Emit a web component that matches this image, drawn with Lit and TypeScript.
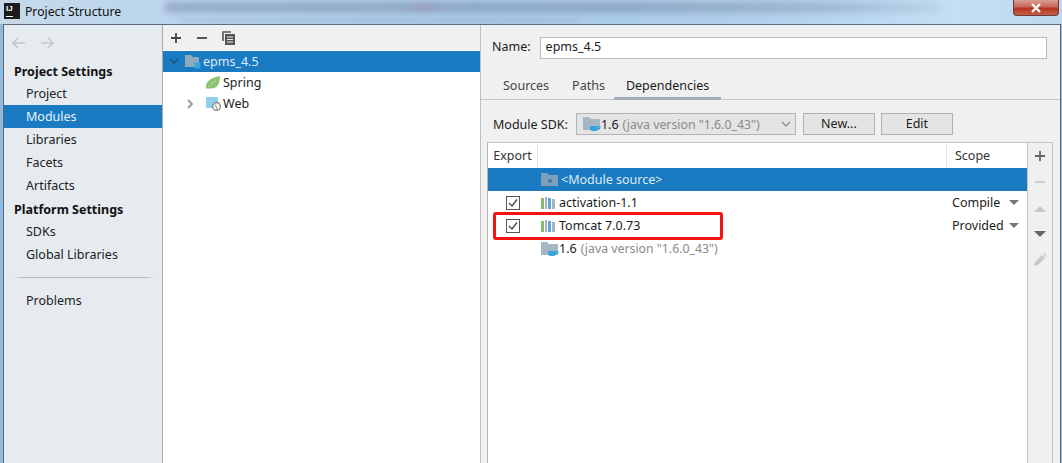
import { LitElement, html, css, svg } from "lit";
import { customElement } from "lit/decorators.js";

const folder = (overlay: unknown, color = "#a6b6c3") => html`<svg class="ic" width="18" height="16" viewBox="0 0 18 16">
  <path d="M0 1h6l2 2h9v11H0z" fill="${color}"/>${overlay}</svg>`;
const sdk = folder(svg`<path d="M7 10h8v2.500a2.500 2.500 0 0 1-2.500 2.500h-3A2.500 2.500 0 0 1 7 12.500z" fill="#35a5dc"/><path d="M15 10.500h2v2h-2" fill="none" stroke="#35a5dc"/>`);
const lib = html`<svg class="ic lb" width="16" height="14" viewBox="0 0 16 14">
  <rect x="0" y="2" width="3" height="11" fill="#86b872"/><rect x="4" y="1" width="2" height="12" fill="#a9b4bc"/>
  <rect x="7" y="2" width="3" height="11" fill="#58a8d8"/><rect x="11" y="3" width="3" height="10" fill="#a9b4bc"/></svg>`;
const check = html`<svg class="chk" width="14" height="14" viewBox="0 0 14 14">
  <rect x=".5" y=".5" width="13" height="13" fill="#fff" stroke="#555"/><path d="M3 7l3 3 5-6.500" fill="none" stroke="#444" stroke-width="1.300"/></svg>`;

@customElement("app-root")
export class AppRoot extends LitElement {
  static styles = css`
    :host { display: block; width: 1062px; height: 463px; overflow: hidden; position: relative;
      font: 12.5px "Noto Sans", "Open Sans", sans-serif; color: #1c1c1c; background: #8fb9de; }
    .title { height: 24px; position: relative; overflow: hidden; display: flex; align-items: center; gap: 5px; padding: 0 0 2px 4px; box-sizing: border-box;
      background: linear-gradient(90deg,#c6d9ea 0,#bcd6ee 14%,#a9cbe9 45%,#b0d0ec 70%,#c4dff5 90%,#bcd8ef 100%); }
    .blur { position: absolute; left: 165px; top: 2px; width: 775px; height: 11px; filter: blur(3px);
      background: linear-gradient(90deg,#8e92b0,#7f93ab 2%,#7f93ab 31%,#8c7f9f 33%,#7d91ad 36%,#7d91ad 60%,#8ea3bd 85%,#b5cde3); opacity: .6; }
    .blur2 { position: absolute; left: 180px; top: 19px; width: 400px; height: 3px; filter: blur(2px); background: #8fa9c4; opacity: .5; }
    .logo { width: 16px; height: 16px; background: #1b1b1b; color: #fff; font: 700 8px/10px "Liberation Sans", sans-serif; box-sizing: border-box; padding: 1px 0 0 2px; position: relative; flex: none; }
    .logo i { position: absolute; left: 2px; bottom: 2px; width: 7px; height: 1px; background: #fff; }
    .ttxt { font-size: 12.2px; position: relative; color: #111; }
    .close { position: absolute; right: 3px; top: 0; width: 46px; height: 16px; box-sizing: border-box; border: 1px solid #6d3b36; border-top: 0; border-radius: 0 0 4px 4px;
      background: linear-gradient(#d89e93,#c9685a 45%,#b5341f 55%,#c4604c); display: flex; align-items: center; justify-content: center; }
    .win { position: absolute; left: 3px; right: 1px; top: 24px; bottom: 0; border: 1px solid #5a6b7c; border-bottom: 0; display: flex; background: #f0f0f0; }
    .side { width: 158px; flex: none; background: #e6ebf0; border-right: 1px solid #a8a8a8; }
    .nav { height: 35px; display: flex; align-items: center; gap: 12px; padding-left: 7px; }
    .h { height: 22px; line-height: 24px; font-weight: 700; padding-left: 10px; color: #111; }
    .h.two { height: 23px; line-height: 26px; }
    .i { height: 23px; line-height: 23px; padding-left: 22px; color: #222; }
    .i.sel { background: #1a7bc3; color: #e8f0f8; }
    .sep { height: 1px; margin: 11px 6px 11px 8px; background: linear-gradient(90deg,#e6ebf0,#b5b9bd 8%,#b5b9bd 92%,#e6ebf0); }
    .mid { width: 317px; flex: none; border-right: 1px solid #c0c0c0; display: flex; flex-direction: column; }
    .tb { display: flex; align-items: center; gap: 14px; padding-left: 7px; border-bottom: 1px solid #fff; box-sizing: border-box; height: 26px; }
    .tree { flex: 1; background: #fff; }
    .r { height: 21px; display: flex; align-items: center; }
    .r.sel { background: #1a7bc3; color: #dfeaf4; }
    .r.leaf { padding-left: 42px; }
    .r.web { padding-left: 16px; }
    .r.web .ic { margin-left: 4px; }
    .tw { width: 22px; display: flex; justify-content: center; }
    .r .ic { margin-right: 2px; }
    .main { flex: 1; min-width: 0; display: flex; flex-direction: column; }
    .name { display: flex; align-items: center; height: 22px; margin: 12px 0 0 11px; gap: 9px; line-height: 20px; }
    .name span { position: relative; top: -1px; }
    .input { width: 507px; height: 22px; box-sizing: border-box; flex: none; border: 1px solid #b8b8b8; background: #fff; padding-left: 5px; line-height: 18px; color: #222; }
    .tabs { display: flex; margin-top: 15px; height: 26px; border-bottom: 1px solid #c9c9c9; padding-left: 10px; box-sizing: border-box; }
    .tab { padding: 0 12px; line-height: 23px; color: #444; box-sizing: border-box; height: 26px; }
    .tab.src { padding-right: 11px; }
    .tab.pth { padding: 0 9px 0 12px; }
    .tab.on { color: #1c1c1c; box-shadow: inset 0 -3px 0 #a3adb9; }
    .sdk { display: flex; align-items: center; height: 22px; margin: 13px 0 0 12px; }
    .combo { width: 220px; height: 22px; box-sizing: border-box; margin-left: 8px; border: 1px solid #b4b4b4; background: #e4e4e4; display: flex; align-items: center; padding-left: 6px; white-space: nowrap; position: relative; color: #222; }
    .gray { color: #8a8a8a; margin-left: 4px; font-size: 12.3px; }
    .combo svg.ch { position: absolute; right: 4px; top: 7px; }
    .btn { height: 22px; box-sizing: border-box; width: 72px; border: 1px solid #b0b0b0; background: #e4e4e4; text-align: center; line-height: 19px; margin-left: 7px; color: #222; }
    .btn + .btn { margin-left: 6px; }
    .tw2 { flex: 1; display: flex; margin: 7px 7px 0 6px; min-height: 0; border: 1px solid #c4c4c4; border-bottom: 0; border-left-color: #b5b5b5; }
    .table { flex: 1; background: #fff; position: relative; min-width: 0; }
    .th { height: 25px; display: flex; align-items: center; line-height: 25px; border-bottom: 1px solid #fff; box-sizing: border-box; }
    .c1 { width: 50px; flex: none; display: flex; justify-content: center; box-sizing: border-box; }
    .th .c1 { border-right: 1px solid #e4e4e4; height: 23px; line-height: 23px; color: #333; }
    .c2 { flex: 1; display: flex; align-items: center; min-width: 0; white-space: nowrap; padding-left: 3px; }
    .c2 .lb { margin-right: 2px; }
    .c2 .ms { margin-left: 2px; }
    .c3 { width: 81px; flex: none; box-sizing: border-box; padding-left: 6px; display: flex; align-items: center; justify-content: space-between; padding-right: 8px; }
    .th .c3 { border-left: 1px solid #e4e4e4; height: 23px; padding-left: 8px; color: #333; }
    .tr { height: 23px; display: flex; align-items: center; }
    .tr.sel { background: #1a7bc3; color: #dfeaf4; }
    .tri { width: 0; height: 0; border: 5px solid transparent; border-top: 5px solid #777; border-bottom: 0; }
    .red { position: absolute; left: 5px; top: 69px; width: 230px; height: 28px; box-sizing: border-box; border: 3px solid #f01414; border-radius: 3px; pointer-events: none; }
    .side2 { width: 24px; flex: none; border-left: 1px solid #c4c4c4; display: flex; flex-direction: column; align-items: center; }
    .side2 svg { display: block; height: 14px; margin-top: 12px; }
    .side2 svg:first-child { margin-top: 6px; }
  `;

  render() {
    return html`
      <div class="title">
        <div class="blur"></div><div class="blur2"></div>
        <div class="logo">IJ<i></i></div>
        <span class="ttxt">Project Structure</span>
        <div class="close"><svg width="12" height="10" viewBox="0 0 12 10"><path d="M2 1l8 8M10 1L2 9" stroke="#fff" stroke-width="2.400"/></svg></div>
      </div>
      <div class="win">
        <div class="side">
          <div class="nav">
            <svg width="16" height="12" viewBox="0 0 16 12"><path d="M14 6H2M7 1L2 6l5 5" fill="none" stroke="#c4c8cc" stroke-width="1.600"/></svg>
            <svg width="16" height="12" viewBox="0 0 16 12"><path d="M2 6h12M9 1l5 5-5 5" fill="none" stroke="#c4c8cc" stroke-width="1.600"/></svg>
          </div>
          <div class="h">Project Settings</div>
          <div class="i">Project</div><div class="i sel">Modules</div><div class="i">Libraries</div><div class="i">Facets</div><div class="i">Artifacts</div>
          <div class="h two">Platform Settings</div>
          <div class="i">SDKs</div><div class="i">Global Libraries</div>
          <div class="sep"></div>
          <div class="i">Problems</div>
        </div>
        <div class="mid">
          <div class="tb">
            <svg width="12" height="12" viewBox="0 0 12 12"><path d="M6 1v10M1 6h10" stroke="#444" stroke-width="1.800"/></svg>
            <svg width="12" height="12" viewBox="0 0 12 12"><path d="M1 6h10" stroke="#444" stroke-width="1.800"/></svg>
            <svg width="13" height="14" viewBox="0 0 13 14"><path d="M1 10V1h8" fill="none" stroke="#555" stroke-width="1.600"/><path d="M3 3h10v11H3z" fill="#555"/><path d="M5 6h6M5 8.500h6M5 11h6" stroke="#eee"/></svg>
          </div>
          <div class="tree">
            <div class="r sel">
              <span class="tw"><svg width="10" height="7" viewBox="0 0 10 7"><path d="M1 1l4 4 4-4" fill="none" stroke="#1c5a8a" stroke-width="1.800"/></svg></span>
              <svg class="ic" width="16" height="15" viewBox="0 0 16 15"><path d="M0 1h6l2 2h6v10H0z" fill="#8ea8bd"/><rect x="9.500" y="8.500" width="6" height="6" fill="#35a5dc"/></svg>
              <span>epms_4.5</span>
            </div>
            <div class="r leaf">
              <svg class="ic" width="16" height="13" viewBox="0 0 16 13"><path d="M1 12.500C0 6 5 2 15 0c0 8-3 12.500-9 12.500-2 0-4 0-5 0z" fill="#8dc271"/><path d="M3 11c3-3 5-5 8-6" stroke="#b8dca5" fill="none"/></svg>
              <span>Spring</span>
            </div>
            <div class="r web">
              <span class="tw"><svg width="8" height="10" viewBox="0 0 8 10"><path d="M2 1l4 4-4 4" fill="none" stroke="#999" stroke-width="1.800"/></svg></span>
              <svg class="ic" width="16" height="14" viewBox="0 0 16 14"><rect x="1" y="0" width="12" height="11" fill="#8fd0ee"/><circle cx="11.500" cy="9.500" r="4" fill="#eee" stroke="#888" stroke-width="1.300"/><path d="M9.500 7.500c2 1 1 3 3 5" stroke="#888" fill="none"/></svg>
              <span>Web</span>
            </div>
          </div>
        </div>
        <div class="main">
          <div class="name"><span>Name:</span><div class="input">epms_4.5</div></div>
          <div class="tabs"><div class="tab src">Sources</div><div class="tab pth">Paths</div><div class="tab on">Dependencies</div></div>
          <div class="sdk">
            <span>Module SDK:</span>
            <div class="combo">${sdk}<span>1.6</span><span class="gray">(java version "1.6.0_43")</span>
              <svg class="ch" width="10" height="6" viewBox="0 0 10 6"><path d="M1 1l4 4 4-4" fill="none" stroke="#888" stroke-width="1.200"/></svg></div>
            <div class="btn">New...</div><div class="btn">Edit</div>
          </div>
          <div class="tw2">
            <div class="table">
              <div class="th"><div class="c1">Export</div><div class="c2"></div><div class="c3">Scope</div></div>
              <div class="tr sel"><div class="c1"></div><div class="c2">${folder(svg`<circle cx="9" cy="9" r="2" fill="#2f7fb8"/>`, "#7d9fbb")}<span class="ms">&lt;Module source&gt;</span></div><div class="c3"></div></div>
              <div class="tr"><div class="c1">${check}</div><div class="c2">${lib}<span>activation-1.1</span></div><div class="c3"><span>Compile</span><i class="tri"></i></div></div>
              <div class="tr"><div class="c1">${check}</div><div class="c2">${lib}<span>Tomcat 7.0.73</span></div><div class="c3"><span>Provided</span><i class="tri"></i></div></div>
              <div class="tr"><div class="c1"></div><div class="c2">${sdk}<span>1.6</span><span class="gray">(java version "1.6.0_43")</span></div><div class="c3"></div></div>
              <div class="red"></div>
            </div>
            <div class="side2">
              <svg width="14" height="14" viewBox="0 0 14 14"><path d="M7 2v10M2 7h10" stroke="#666" stroke-width="1.800"/></svg>
              <svg width="14" height="14" viewBox="0 0 14 14"><path d="M2 7h10" stroke="#c4c4c4" stroke-width="1.800"/></svg>
              <svg width="14" height="14" viewBox="0 0 14 14"><path d="M1 11l6-6 6 6z" fill="#c8c8c8"/></svg>
              <svg width="14" height="14" viewBox="0 0 14 14"><path d="M1 4l6 6 6-6z" fill="#666"/></svg>
              <svg width="14" height="14" viewBox="0 0 14 14"><path d="M1 13l1-4 7-7 3 3-7 7zM10 1l1-1 3 3-1 1z" fill="#c8c8c8"/></svg>
            </div>
          </div>
        </div>
      </div>`;
  }
}
